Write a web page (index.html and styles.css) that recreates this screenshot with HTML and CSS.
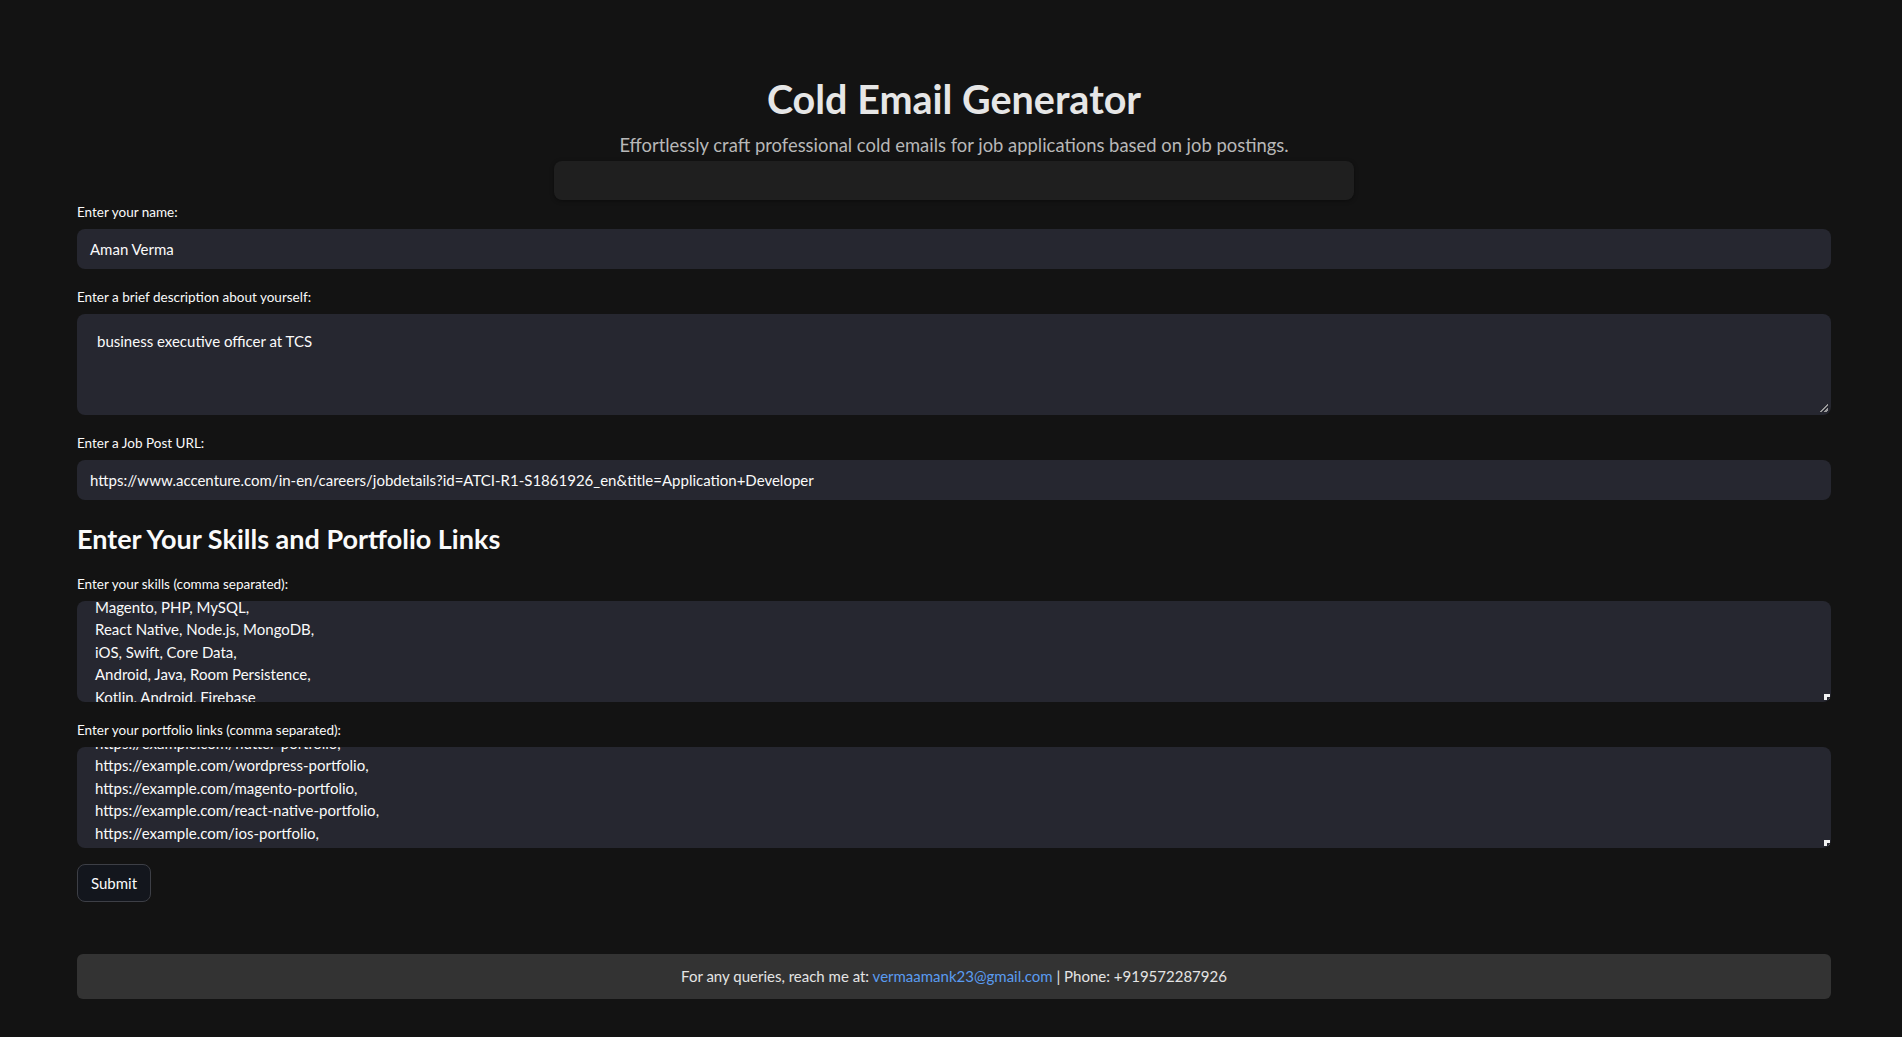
FILE: index.html
```html
<!DOCTYPE html>
<html lang="en">
<head>
<meta charset="utf-8">
<title>Cold Email Generator</title>
<link rel="stylesheet" href="styles.css">
</head>
<body>
<main class="app">
  <header class="hero">
    <h1 class="title">Cold Email Generator</h1>
    <p class="subtitle">Effortlessly craft professional cold emails for job applications based on job postings.</p>
    <div class="hero-box"></div>
  </header>

  <section class="form">
    <div class="field">
      <label class="label">Enter your name:</label>
      <div class="input">Aman Verma</div>
    </div>

    <div class="field">
      <label class="label">Enter a brief description about yourself:</label>
      <div class="textarea desc">
        <div class="lines">business executive officer at TCS</div>
        <span class="grip"></span>
      </div>
    </div>

    <div class="field">
      <label class="label">Enter a Job Post URL:</label>
      <div class="input">https://www.accenture.com/in-en/careers/jobdetails?id=ATCI-R1-S1861926_en&amp;title=Application+Developer</div>
    </div>

    <h3 class="section-title">Enter Your Skills and Portfolio Links</h3>

    <div class="field">
      <label class="label">Enter your skills (comma separated):</label>
      <div class="textarea scrolled">
        <div class="lines skills">
          <div>Magento, PHP, MySQL,</div>
          <div>React Native, Node.js, MongoDB,</div>
          <div>iOS, Swift, Core Data,</div>
          <div>Android, Java, Room Persistence,</div>
          <div>Kotlin, Android, Firebase</div>
        </div>
        <span class="corner"></span>
      </div>
    </div>

    <div class="field">
      <label class="label">Enter your portfolio links (comma separated):</label>
      <div class="textarea scrolled">
        <div class="lines links">
          <div>https://example.com/flutter-portfolio,</div>
          <div>https://example.com/wordpress-portfolio,</div>
          <div>https://example.com/magento-portfolio,</div>
          <div>https://example.com/react-native-portfolio,</div>
          <div>https://example.com/ios-portfolio,</div>
        </div>
        <span class="corner"></span>
      </div>
    </div>

    <div class="actions">
      <button class="btn" type="button">Submit</button>
    </div>
  </section>

  <footer class="footer">For any queries, reach me at: <a class="mail" href="#">vermaamank23@gmail.com</a> | Phone: +919572287926</footer>
</main>
</body>
</html>
```

FILE: styles.css
```css
* { box-sizing: border-box; }

html, body {
  margin: 0;
  padding: 0;
  background: #131313;
}

body {
  font-family: "Lato", "Open Sans", sans-serif;
  color: #fafafa;
}

.app {
  padding: 0 71px 38px 77px;
}

.hero {
  display: flex;
  flex-direction: column;
  align-items: center;
  padding-top: 76px;
}

.title {
  margin: 0;
  font-size: 39.5px;
  line-height: 46px;
  font-weight: 700;
  color: #e6e6e6;
}

.subtitle {
  margin: 11px 0 0;
  font-size: 18.4px;
  line-height: 24px;
  color: #b8b8b8;
}

.hero-box {
  width: 800px;
  height: 39px;
  margin-top: 4px;
  background: #1f1f1f;
  border-radius: 8px;
  box-shadow: 0 1px 4px rgba(0, 0, 0, 0.4);
}

.form {
  display: flex;
  flex-direction: column;
  gap: 16px;
}

.field {
  display: flex;
  flex-direction: column;
}

.label {
  font-size: 13.5px;
  line-height: 25px;
  height: 21px;
  margin-bottom: 8px;
  color: #fafafa;
}

.input {
  height: 40px;
  background: #262730;
  border-radius: 8px;
  padding: 0 13px;
  display: flex;
  align-items: center;
  font-size: 15px;
  color: #fafafa;
  white-space: nowrap;
  overflow: hidden;
}

.textarea {
  position: relative;
  height: 101px;
  background: #262730;
  border-radius: 8px;
  overflow: hidden;
  font-size: 15px;
  line-height: 22.4px;
  color: #fafafa;
}

.desc .lines {
  padding: 16px 20px;
}

.scrolled .lines {
  padding: 0 18px;
}

.skills { margin-top: -5px; }
.links { margin-top: -15px; }

.grip {
  position: absolute;
  right: 3px;
  bottom: 3px;
  width: 8px;
  height: 8px;
  background:
    linear-gradient(135deg, transparent 45%, #9a9a9a 45%, #9a9a9a 58%, transparent 58%),
    linear-gradient(135deg, transparent 75%, #9a9a9a 75%, #9a9a9a 88%, transparent 88%);
}

.corner {
  position: absolute;
  right: 1px;
  bottom: 2px;
  width: 6px;
  height: 6px;
  background: #f2f2f2;
}

.corner::after {
  content: "";
  position: absolute;
  right: 0;
  bottom: 0;
  width: 3px;
  height: 3px;
  background: #262730;
}

.section-title {
  margin: 0;
  height: 40px;
  font-size: 27px;
  line-height: 46px;
  font-weight: 700;
  color: #fafafa;
}

.actions {
  display: flex;
}

.btn {
  height: 38px;
  padding: 0 13px;
  background: #13161d;
  border: 1px solid #3d3f46;
  border-radius: 8px;
  color: #fafafa;
  font-family: inherit;
  font-size: 15px;
}

.footer {
  margin-top: 52px;
  height: 45px;
  line-height: 45px;
  background: #333333;
  border-radius: 6px;
  text-align: center;
  font-size: 15px;
  color: #e4e4e4;
}

.mail {
  color: #5a9bf0;
  text-decoration: none;
}
```
